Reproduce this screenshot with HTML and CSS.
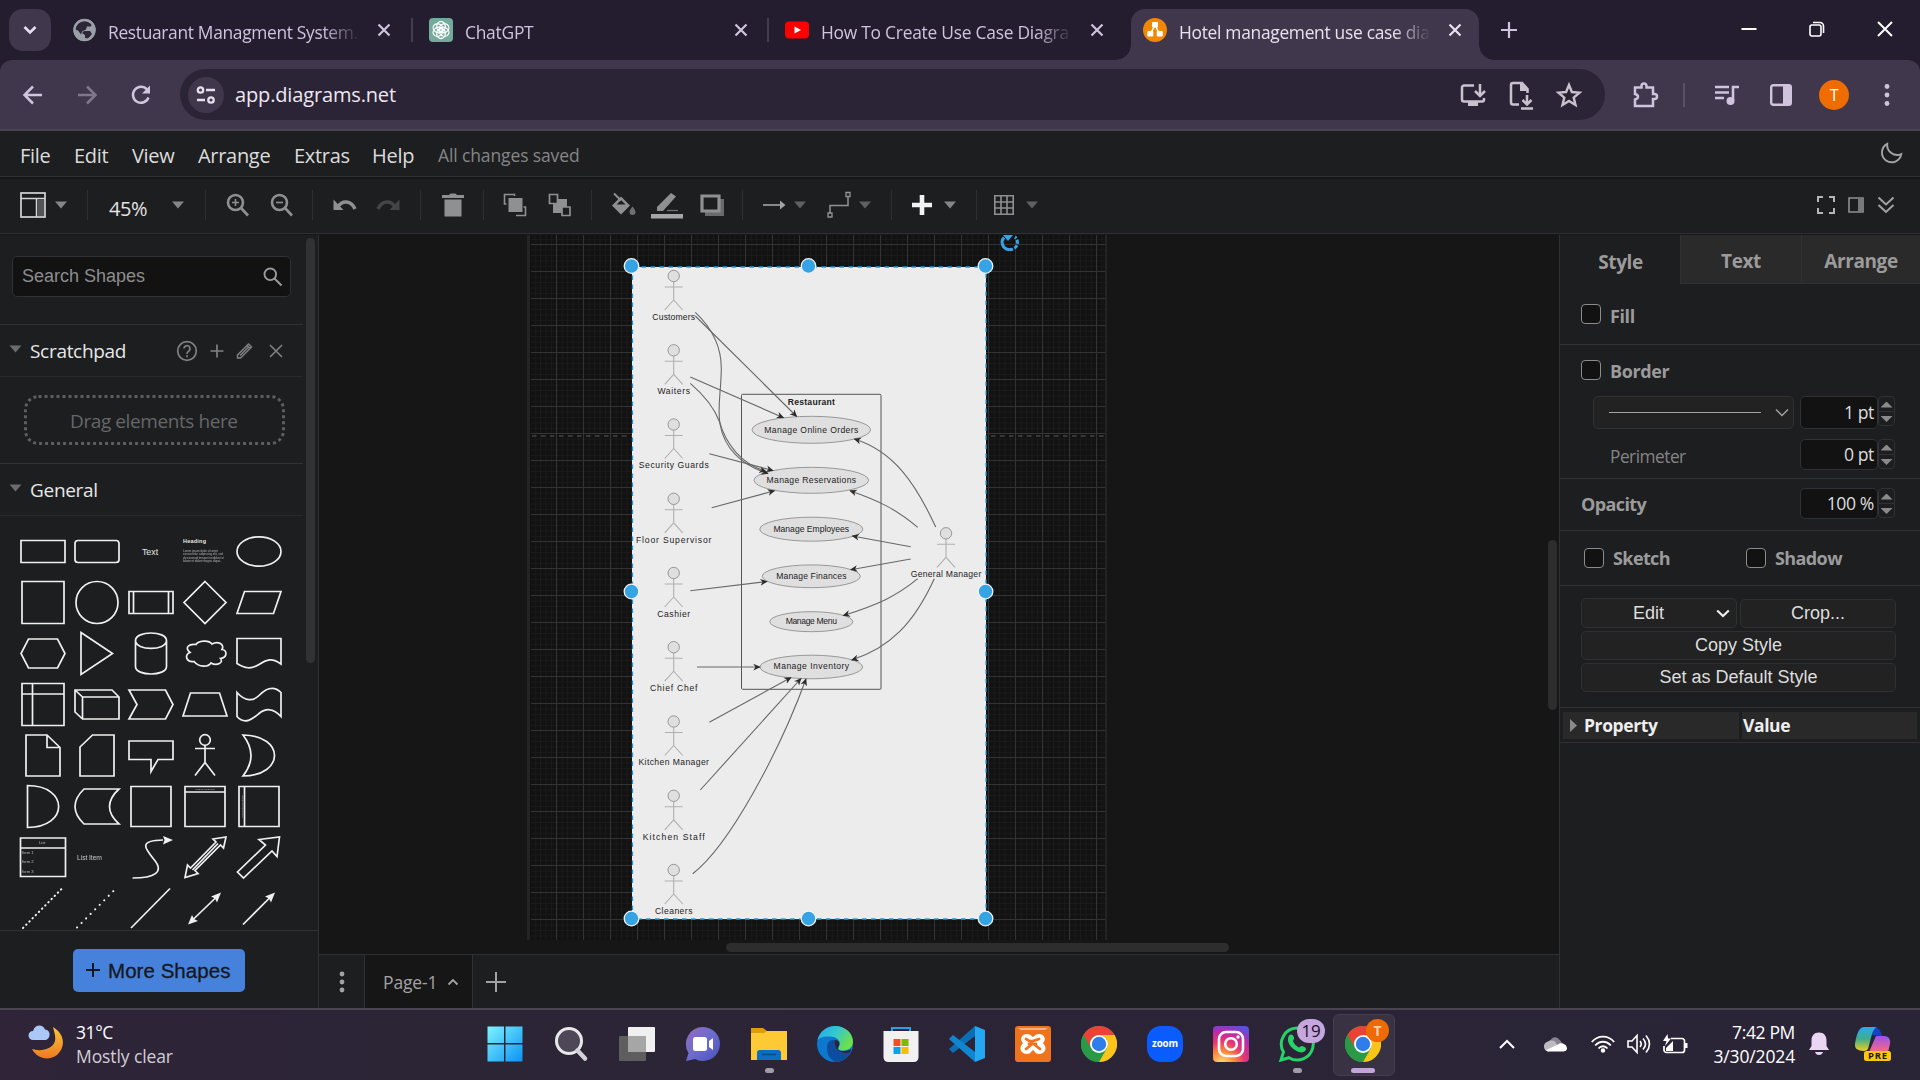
FILE: index.html
```html
<!DOCTYPE html>
<html lang="en">
<head>
<meta charset="utf-8">
<title>Hotel management use case diagram - draw.io</title>
<link rel="stylesheet" href="styles.css">
</head>
<body>
<svg class="defs" width="0" height="0" aria-hidden="true">
  <defs>
    <symbol id="close" viewBox="0 0 14 14"><path d="M1.5 1.5l11 11M12.5 1.5l-11 11" fill="none" stroke="currentColor" stroke-width="2.2"/></symbol>
    <symbol id="caret" viewBox="0 0 12 8"><path d="M0 0.5h12L6 7.5z" fill="currentColor"/></symbol>
    <symbol id="chrome" viewBox="0 0 36 36">
      <circle cx="18" cy="18" r="18" fill="#2b9a48"/>
      <path d="M2.4 9A18 18 0 0 1 33.6 9H18a9 9 0 0 0-8.2 5.4z" fill="#ea4335"/>
      <path d="M2.4 9l7.8 13.5A9 9 0 0 1 18 9z" fill="#ea4335"/>
      <path d="M2.4 9A18 18 0 0 0 18 36l7.8-13.5A9 9 0 0 1 10.2 22.5z" fill="#2b9a48"/>
      <path d="M33.6 9A18 18 0 0 1 18 36l7.8-13.5A9 9 0 0 0 18 9z" fill="#fcc419"/>
      <circle cx="18" cy="18" r="9" fill="#fff"/><circle cx="18" cy="18" r="7.2" fill="#2f7de9"/>
    </symbol>
  </defs>
</svg>

<header class="tabstrip">
  <button class="tab-search"><svg width="14" height="10" viewBox="0 0 14 10"><path d="M1.5 2L7 7.5 12.5 2" fill="none" stroke="currentColor" stroke-width="2.6"/></svg></button>
  <div class="tab">
    <svg class="favicon" width="24" height="24" viewBox="0 0 24 24"><circle cx="11.500" cy="12" r="11" fill="#9aa0a6"/><path d="M9 2.500c4-1 8 0 10 3l-1 3-4 0-1 3-4 2-1 3-3-4-3-1c0-3 3-8 7-9z" fill="#2c2637"/><path d="M11 13h6l2 3-4 5-3-1 0-3-3-2z" fill="#2c2637"/><circle cx="11.500" cy="12" r="10" fill="none" stroke="#9aa0a6" stroke-width="2.400"/></svg>
    <span class="tab-title first">Restuarant Managment System.</span>
    <svg class="x" width="14" height="14"><use href="#close"/></svg>
  </div>
  <div class="tab">
    <svg class="favicon" width="24" height="24" viewBox="0 0 24 24"><rect width="24" height="24" rx="4" fill="#74aa9c"/><g fill="none" stroke="#fff" stroke-width="1.300"><ellipse cx="12" cy="8.500" rx="4.300" ry="5"/><ellipse cx="12" cy="8.500" rx="4.300" ry="5" transform="rotate(60 12 12)"/><ellipse cx="12" cy="8.500" rx="4.300" ry="5" transform="rotate(120 12 12)"/><ellipse cx="12" cy="8.500" rx="4.300" ry="5" transform="rotate(180 12 12)"/><ellipse cx="12" cy="8.500" rx="4.300" ry="5" transform="rotate(240 12 12)"/><ellipse cx="12" cy="8.500" rx="4.300" ry="5" transform="rotate(300 12 12)"/></g></svg>
    <span class="tab-title">ChatGPT</span>
    <svg class="x" width="14" height="14"><use href="#close"/></svg>
  </div>
  <div class="tab plain">
    <svg class="favicon" width="24" height="24" viewBox="0 0 24 24"><rect y="3.500" width="24" height="17" rx="4" fill="#f00"/><path d="M9.500 8.500v7l6.500-3.500z" fill="#fff"/></svg>
    <span class="tab-title">How To Create Use Case Diagra</span>
    <svg class="x" width="14" height="14"><use href="#close"/></svg>
  </div>
  <div class="tab active">
    <svg class="favicon" width="24" height="24" viewBox="0 0 24 24"><circle cx="12" cy="12" r="12" fill="#f08705"/><path d="M12 7L7.500 16M12 7l4.500 9" stroke="#fff" stroke-width="1.600"/><rect x="9" y="4" width="6" height="5.500" rx="1" fill="#fff"/><rect x="4.300" y="13" width="6" height="5.500" rx="1" fill="#fff"/><rect x="13.700" y="13" width="6" height="5.500" rx="1" fill="#fff"/></svg>
    <span class="tab-title">Hotel management use case dia</span>
    <svg class="x" width="14" height="14"><use href="#close"/></svg>
  </div>
  <svg class="new-tab" width="16" height="16" viewBox="0 0 16 16"><path d="M8 0v16M0 8h16" stroke="#cfc3dd" stroke-width="2.200"/></svg>
  <div class="window-buttons">
    <svg width="16" height="16" viewBox="0 0 16 16"><path d="M0.500 8h15" stroke="#fff" stroke-width="2"/></svg>
    <svg width="16" height="16" viewBox="0 0 16 16"><g fill="none" stroke="#fff" stroke-width="1.600"><rect x="1" y="4" width="11" height="11" rx="2"/><path d="M4 1.500h7a3.500 3.500 0 0 1 3.500 3.500v7"/></g></svg>
    <svg width="16" height="16" viewBox="0 0 16 16"><path d="M1 1l14 14M15 1L1 15" stroke="#fff" stroke-width="1.900"/></svg>
  </div>
</header>

<nav class="browserbar">
  <svg width="24" height="24" viewBox="0 0 24 24"><path d="M21 12H4M12 3.500L3.500 12l8.500 8.500" fill="none" stroke="#d0c5de" stroke-width="2.500"/></svg>
  <svg width="24" height="24" viewBox="0 0 24 24"><path d="M3 12h17M12 3.500L20.500 12 12 20.500" fill="none" stroke="#81768d" stroke-width="2.500"/></svg>
  <svg width="24" height="24" viewBox="0 0 24 24"><path d="M19.500 14.500A8 8 0 1 1 18 6.500l2 2.500" fill="none" stroke="#d0c5de" stroke-width="2.500"/><path d="M21 2.500v8h-8z" fill="#d0c5de"/></svg>
  <div class="omnibox">
    <span class="site-info"><svg width="20" height="18" viewBox="0 0 20 18"><g fill="none" stroke="#e6e0ec" stroke-width="2.300"><circle cx="4.500" cy="4" r="2.700"/><path d="M10 4h9M1 14h8"/><circle cx="15" cy="14" r="2.700"/></g></svg></span>
    <span class="url">app.diagrams.net</span>
    <div class="omni-icons">
      <svg width="26" height="26" viewBox="0 0 26 26"><g fill="none" stroke="#c9c2ce" stroke-width="2.500"><path d="M14 3.500H4a2 2 0 0 0-2 2v12a2 2 0 0 0 2 2h18a2 2 0 0 0 2-2V16"/><path d="M20 2v11M15 9l5 5 5-5"/></g><path d="M8 20h10v4H8z" fill="#c9c2ce"/></svg>
      <svg width="26" height="28" viewBox="0 0 26 28"><g fill="none" stroke="#c9c2ce" stroke-width="2.500"><path d="M11 23.500H5a2 2 0 0 1-2-2V4a2 2 0 0 1 2-2h9l5.500 6v4"/><path d="M19 14v9M14.500 19l4.500 4.500 4.500-4.500M13 27.500h12"/></g><path d="M12 1v9h9z" fill="#c9c2ce"/></svg>
      <svg width="26" height="26" viewBox="0 0 26 26"><path d="M13 3l2.900 7 7.600.6-5.800 5 1.800 7.400-6.500-4-6.500 4 1.800-7.400-5.800-5 7.600-.6z" fill="none" stroke="#c9c2ce" stroke-width="2.400"/></svg>
    </div>
  </div>
  <svg width="28" height="28" viewBox="0 0 28 28"><path d="M4 6.500h6.500V5a2.500 2.500 0 0 1 5 0v1.500H22V13h1.500a2.500 2.500 0 0 1 0 5H22v7H4v-6.500c4-1 4-4.500 0-5.500z" fill="none" stroke="#cfc3dd" stroke-width="2.500"/></svg>
  <i class="bar-divider"></i>
  <svg width="26" height="24" viewBox="0 0 26 24"><path d="M1 4h14M1 9.500h14M1 15h9" stroke="#cfc3dd" stroke-width="2.400"/><path d="M19 18V4h6" fill="none" stroke="#cfc3dd" stroke-width="2.600"/><circle cx="16.500" cy="18" r="4" fill="#cfc3dd"/></svg>
  <svg width="24" height="24" viewBox="0 0 24 24"><rect x="2.200" y="2.200" width="19.600" height="19.600" rx="2" fill="none" stroke="#cfc3dd" stroke-width="2.400"/><path d="M14 2h8v20h-8z" fill="#cfc3dd"/></svg>
  <span class="avatar">T</span>
  <svg width="8" height="24" viewBox="0 0 8 24"><g fill="#cfc3dd"><circle cx="4" cy="3.500" r="2.400"/><circle cx="4" cy="12" r="2.400"/><circle cx="4" cy="20.500" r="2.400"/></g></svg>
</nav>

<div class="menubar">
  <span>File</span><span>Edit</span><span>View</span><span>Arrange</span><span>Extras</span><span>Help</span><span class="saved">All changes saved</span>
  <svg width="24" height="24" viewBox="0 0 24 24"><path d="M9.500 2.500a9.700 9.700 0 1 0 12.500 12A10 10 0 0 1 9.500 2.500z" transform="rotate(-8 12 12)" fill="none" stroke="#a2a3a4" stroke-width="1.900"/></svg>
</div>

<div class="toolbar">
  <svg width="28" height="28" viewBox="0 0 28 28"><rect x="2" y="2" width="24" height="24" fill="none" stroke="#d5d5d5" stroke-width="1.700"/><path d="M2 7.500h24M17.500 8v18" stroke="#d5d5d5" stroke-width="1.500"/><path d="M18.500 8.500h6.500v16.500h-6.500z" fill="#555"/></svg>
  <svg class="caret" width="12" height="8"><use href="#caret"/></svg>
  <i></i>
  <span class="zoom">45%</span>
  <svg class="caret" width="12" height="8"><use href="#caret"/></svg>
  <i></i>
  <svg width="24" height="24" viewBox="0 0 24 24"><g fill="none" stroke="#8f9091" stroke-width="2.600"><circle cx="9.500" cy="9.500" r="7.500"/><path d="M15 15l7 7.500"/><path d="M9.500 6v7M6 9.500h7" stroke-width="1.600"/></g></svg>
  <svg width="24" height="24" viewBox="0 0 24 24"><g fill="none" stroke="#8f9091" stroke-width="2.600"><circle cx="9.500" cy="9.500" r="7.500"/><path d="M15 15l7 7.500"/><path d="M6 9.500h7" stroke-width="1.600"/></g></svg>
  <i></i>
  <svg width="24" height="14" viewBox="0 0 24 14"><path d="M5 9C9 2 18 2 22 11" fill="none" stroke="#8f9091" stroke-width="3.400"/><path d="M0.500 1.500v10.500h10z" fill="#8f9091"/></svg>
  <svg width="24" height="14" viewBox="0 0 24 14"><path d="M19 9C15 2 6 2 2 11" fill="none" stroke="#434546" stroke-width="3.400"/><path d="M23.500 1.500v10.500h-10z" fill="#434546"/></svg>
  <i></i>
  <svg width="24" height="24" viewBox="0 0 24 24"><path d="M1 2h7l1.500-1.500h5L16 2h7v3H1zM3.500 6.500h17v17h-17z" fill="#8f9091"/></svg>
  <i></i>
  <svg width="24" height="24" viewBox="0 0 24 24"><path d="M5.500 5h14v14h-14z" fill="#8f9091"/><path d="M3.500 11H1.500V1.500h10V3M13 22.500h9.500V14h-2" fill="none" stroke="#8f9091" stroke-width="1.600"/></svg>
  <svg width="24" height="24" viewBox="0 0 24 24"><path d="M5 6h14v14H5z" fill="#8f9091"/><path d="M1.500 1.500h8v9h-8zM14 14h8v8.500h-8z" fill="#1d1e20" stroke="#8f9091" stroke-width="1.700"/></svg>
  <i></i>
  <svg width="26" height="26" viewBox="0 0 26 26"><path d="M11 4.500l-9 9 9 9 9-9zM6.500 12.500L11 8l4.500 4.500z" fill="#8f9091" fill-rule="evenodd"/><path d="M4 1.500l7 7" stroke="#8f9091" stroke-width="2"/><path d="M22.500 14.500s-3 3.600-3 5.500a3 3 0 0 0 6 0c0-1.900-3-5.500-3-5.500z" fill="#6f7071"/></svg>
  <svg width="32" height="30" viewBox="0 0 32 30"><path d="M6 17L20 3l5 3.500L12 21H6z" fill="#8f9091"/><path d="M16 20.500h11" stroke="#6f7071" stroke-width="1.300"/><path d="M0 24h32v4.500H0z" fill="#a5a6a7"/></svg>
  <svg width="24" height="22" viewBox="0 0 24 22"><path d="M5 5h19v17H5z" fill="#696a6b"/><path d="M2 2h17v15H2z" fill="#1d1e20" stroke="#8f9091" stroke-width="3.200"/></svg>
  <i></i>
  <svg width="24" height="12" viewBox="0 0 24 12"><path d="M1 6h18" stroke="#a2a3a4" stroke-width="1.600"/><path d="M18 1.500L23.500 6 18 10.500z" fill="#a2a3a4"/></svg>
  <svg class="caret dim" width="12" height="8"><use href="#caret"/></svg>
  <svg width="34" height="28" viewBox="0 0 34 28"><path d="M13 23V14.500h18V5" fill="none" stroke="#929394" stroke-width="1.500"/><path d="M11 22h4v4h-4zM29 1.500h4v4h-4z" fill="#1d1e20" stroke="#929394" stroke-width="1.300"/></svg>
  <svg class="caret dim" width="12" height="8"><use href="#caret"/></svg>
  <i></i>
  <svg width="20" height="20" viewBox="0 0 20 20"><path d="M10 0v20M0 10h20" stroke="#f2f2f2" stroke-width="4.600"/></svg>
  <svg class="caret" width="12" height="8"><use href="#caret"/></svg>
  <i></i>
  <svg width="20" height="20" viewBox="0 0 20 20"><path d="M.8.800h18.400v18.400H.8zM7 1v18M13 1v18M1 7h18M1 13h18" fill="none" stroke="#8f9091" stroke-width="1.600"/></svg>
  <svg class="caret dim" width="12" height="8"><use href="#caret"/></svg>
  <b></b>
  <svg width="18" height="18" viewBox="0 0 18 18"><path d="M1 6V1h5M12 1h5v5M17 12v5h-5M6 17H1v-5" fill="none" stroke="#b5b6b7" stroke-width="2"/></svg>
  <svg width="16" height="16" viewBox="0 0 16 16"><path d="M1 1h14v14H1z" fill="none" stroke="#8f9091" stroke-width="1.600"/><path d="M10 1h5v14h-5z" fill="#77797a"/></svg>
  <svg width="18" height="18" viewBox="0 0 18 18"><path d="M1.500 1.500L9 8.500l7.500-7M1.500 9L9 16l7.500-7" fill="none" stroke="#a2a3a4" stroke-width="2"/></svg>
</div>

<main class="workspace">
  <aside class="sidebar">
    <div class="sidebar-scroll">
      <div class="sidebar-content">
        <div class="search-wrap"><div class="search"><span>Search Shapes</span><svg width="20" height="20" viewBox="0 0 20 20"><g fill="none" stroke="#9a9b9c" stroke-width="1.900"><circle cx="7.300" cy="7.300" r="5.800"/><path d="M11.500 11.500l7 7"/></g></svg></div></div>
        <div class="section-title">
          <svg class="caret" width="13" height="8"><use href="#caret"/></svg><span>Scratchpad</span>
          <svg class="help" width="22" height="22" viewBox="0 0 22 22"><g fill="none" stroke="#808182" stroke-width="1.700"><circle cx="11" cy="11" r="9.300"/><path d="M8 8.500a3 3 0 1 1 4.500 2.700Q11 12 11 14"/><path d="M11 15.300v2"/></g></svg>
          <svg width="14" height="14" viewBox="0 0 14 14"><path d="M7 .5v13M.5 7h13" stroke="#808182" stroke-width="1.700"/></svg>
          <svg width="18" height="18" viewBox="0 0 18 18"><path d="M1.500 13L12.500 2l3 3-11 11H1.500zM11 3.500l3 3M4 13.500l8-8" fill="none" stroke="#808182" stroke-width="1.500"/></svg>
          <svg width="14" height="14" viewBox="0 0 14 14"><path d="M1 1l12 12M13 1L1 13" stroke="#808182" stroke-width="1.600"/></svg>
        </div>
        <div class="scratch"><svg width="261" height="50" viewBox="0 0 261 50"><rect x="1.500" y="1.500" width="258" height="47" rx="13" fill="none" stroke="#5d5e5f" stroke-width="3" stroke-dasharray="3 3"/><text x="130" y="33" text-anchor="middle" textLength="168">Drag elements here</text></svg></div>
        <div class="section-title general"><svg class="caret" width="13" height="8"><use href="#caret"/></svg><span>General</span></div>
        <div class="shapes">
          <svg viewBox="-27 -25.5 54 51"><path d="M-22-11h44v22h-44z"/></svg>
          <svg viewBox="-27 -25.5 54 51"><rect x="-22" y="-11" width="44" height="22" rx="3"/></svg>
          <svg viewBox="-27 -25.5 54 51"><text x="-1" y="3" font-size="8.800" text-anchor="middle">Text</text></svg>
          <svg viewBox="-27 -25.5 54 51"><text x="-22" y="-8.500" font-size="5.500" font-weight="bold" textLength="23">Heading</text><g font-size="3" opacity=".65"><text x="-22" y="0" textLength="35">Lorem ipsum dolor sit amet</text><text x="-22" y="3" textLength="40">consectetur adipiscing elit, sed</text><text x="-22" y="7" textLength="41">do eiusmod tempor incididunt ut</text><text x="-22" y="10" textLength="38">labore et dolore magna aliqua.</text></g></svg>
          <svg viewBox="-27 -25.5 54 51"><ellipse rx="22" ry="14.700"/></svg>

          <svg viewBox="-27 -25.5 54 51"><path d="M-21-21h42v42h-42z"/></svg>
          <svg viewBox="-27 -25.5 54 51"><circle r="21"/></svg>
          <svg viewBox="-27 -25.5 54 51"><path d="M-22-11h44v22h-44zM-17.500-11v22M17.500-11v22"/></svg>
          <svg viewBox="-27 -25.5 54 51"><path d="M0-21L21 0 0 21-21 0z"/></svg>
          <svg viewBox="-27 -25.5 54 51"><path d="M-14.500-11H22l-7.500 22H-22z"/></svg>

          <svg viewBox="-27 -25.5 54 51"><path d="M-14.500-14.500h29L22 0l-7.500 14.500h-29L-22 0z"/></svg>
          <svg viewBox="-27 -25.5 54 51"><path d="M-16-21L15.500 0-16 21z"/></svg>
          <svg viewBox="-27 -25.500 54 51"><path d="M-15.500-13v26c0 10 31 10 31 0v-26c0-10-31-10-31 0zc0 10.500 31 10.500 31 0"/></svg>
          <svg viewBox="-27 -25.5 54 51"><path d="M-9-9C-16-10-21-6-15 -1C-21 1-19 9-11 8C-6 14 3 14 6 9.500C12 13 19 9 15.500 5C23 4 22-4 17-4C20-9 13-13 7-9.500C4-14-7-13-9-9z"/></svg>
          <svg viewBox="-27 -25.5 54 51"><path d="M-22-15h44V10.500C13 4 8 6 0 11S-14 15-22 10z"/></svg>

          <svg viewBox="-27 -25.5 54 51"><path d="M-21-21h42v42h-42zM-21-10.500h42M-10.500-21v42"/></svg>
          <svg viewBox="-27 -25.5 54 51"><path d="M-22-14.500h37L22-7.500V14.500H-14.500L-22 7.500zM-22-14.500l7.500 7H22M-14.500-7.500v22"/></svg>
          <svg viewBox="-27 -25.5 54 51"><path d="M-22-14.500h36.500L22 0l-7.500 14.500H-22L-14 0z"/></svg>
          <svg viewBox="-27 -25.5 54 51"><path d="M-14.500-11.500h29L22 11.500h-44z"/></svg>
          <svg viewBox="-27 -25.5 54 51"><path d="M-22-12C-14-3-6-3 0-9S14-20 22-12V12C14 3 6 4 0 9S-14 21-22 12z"/></svg>

          <svg viewBox="-27 -25.5 54 51"><path d="M-17-20.500H4L17-8v28.500h-34zM4-20.500V-8h13"/></svg>
          <svg viewBox="-27 -25.5 54 51"><path d="M-4.500-20.500H17v41h-34V-8.500z"/></svg>
          <svg viewBox="-27 -25.5 54 51"><path d="M-22-14.500h44V4H7L0 16V4h-22z"/></svg>
          <svg viewBox="-27 -25.5 54 51"><circle cy="-15.500" r="5.300"/><path d="M0-10V7M-10-7h20M-10 20L0 7l10 13"/></svg>
          <svg viewBox="-27 -25.5 54 51"><path d="M-16-20.500C26-20 26 20-16 20.500Q0 0-16-20.500z"/></svg>

          <svg viewBox="-27 -25.5 54 51"><path d="M-15.500-21C26-21 26 21-15.500 21z"/></svg>
          <svg viewBox="-27 -25.5 54 51"><path d="M-13-17.500H22Q3 0 22 17.500H-13Q-31 0-13-17.500z"/></svg>
          <svg viewBox="-27 -25.5 54 51"><path d="M-20-20h40v40h-40z"/></svg>
          <svg viewBox="-27 -25.5 54 51"><path d="M-20-20h40v40h-40zM-20-14.500h40"/><text x="0" y="-16.500" font-size="2.500" opacity=".7" text-anchor="middle">Vertical Container</text></svg>
          <svg viewBox="-27 -25.5 54 51"><path d="M-20-20h40v40h-40zM-14.500-20v40"/><text x="0" y="-16.500" font-size="2.500" opacity=".7" text-anchor="middle" transform="rotate(-90)">Horizontal Container</text></svg>

          <svg viewBox="-27 -25.5 54 51"><path d="M-22.500-19.500h45v38.500h-45zM-22.500-9.500h45"/><g font-size="4.200" opacity=".7"><text x="-4" y="-14">List</text><text x="-21" y="-4">Item 1</text><text x="-21" y="5">Item 2</text><text x="-21" y="15">Item 3</text></g></svg>
          <svg viewBox="-27 -25.5 54 51"><text x="-20" y="2" font-size="6.800" opacity=".8" textLength="25">List Item</text></svg>
          <svg viewBox="-27 -25.5 54 51"><path d="M-18.500 20.500C3 20.500 14 15 3 2C-7-10-12-17 12-17.500"/><path class="solid" d="M12-21.500l10 4-10 4.500 1.500-4.500z"/></svg>
          <svg viewBox="-27 -25.5 54 51"><path d="M21-20.500L18.500-9.500l-3-3L-10 13l3 3-13 4 2.500-12.500 3 3L11-15.500l-3-3zM-12.500 12.500L13-14"/></svg>
          <svg viewBox="-27 -25.5 54 51"><path d="M20.500-20.500L18-1l-5-5.500L-15.500 20.500-21.500 14.500 6.500-12.500 0-18z"/></svg>

          <svg viewBox="-27 -25.5 54 51"><path class="dots" d="M-20 19.500L19-20" stroke-dasharray="0.500 4"/></svg>
          <svg viewBox="-27 -25.5 54 51"><path class="dots" d="M-20 19L17-18" stroke-dasharray="0.200 6.200"/></svg>
          <svg viewBox="-27 -25.5 54 51"><path d="M-20 19.500L19-20"/></svg>
          <svg viewBox="-27 -25.5 54 51"><path d="M-13 12L12-12"/><path class="solid" d="M16-16l-4 10-2-4-4-2zM-17 16l10-3.500-4-2-2-4z"/></svg>
          <svg viewBox="-27 -25.5 54 51"><path d="M-16 16L12-12"/><path class="solid" d="M16-16l-4 10-2-4-4-2z"/></svg>
        </div>
      </div>
      <div class="sidebar-track"><i></i></div>
    </div>
    <div class="more"><button><svg width="14" height="14" viewBox="0 0 14 14"><path d="M7 0v14M0 7h14" stroke="#15181d" stroke-width="2"/></svg><span>More Shapes</span></button></div>
  </aside>

  <section class="editor">
    <div class="canvas-row">
      <svg class="canvas" width="1229" height="705" viewBox="319 235 1229 705">
        <defs>
          <pattern id="minor" x="529.300" y="244.300" width="5.400" height="5.400" patternUnits="userSpaceOnUse"><path d="M.5 0v5.400M0 .5h5.400" stroke="#1a1a1a" stroke-width="1"/></pattern>
          <pattern id="major" x="529" y="244" width="27" height="27" patternUnits="userSpaceOnUse"><path d="M.5 0v27M0 .5h27" stroke="#323334" stroke-width="1"/></pattern>
          <marker id="arrow" viewBox="0 0 10 10" refX="9" refY="5" markerWidth="7.500" markerHeight="7.500" markerUnits="userSpaceOnUse" orient="auto"><path d="M0 .5L10 5 0 9.500 3 5z" fill="#2b2b2b"/></marker>
          <g id="actor" fill="none" stroke="#b0b0b0"><path d="M0 5.700V24M-9 11H9M-9 34L0 24l9 10" stroke-width="1.100"/><circle r="5.700" fill="#dfdfdf" stroke="#8f8f8f" stroke-width=".9"/></g>
        </defs>
        <rect x="319" y="235" width="1229" height="705" fill="#161616"/>
        <rect x="527" y="235" width="580" height="705" fill="#242424"/>
        <rect x="530" y="235" width="575" height="705" fill="#121212"/>
        <rect x="531" y="235" width="574" height="705" fill="url(#minor)"/>
        <rect x="531" y="235" width="574" height="705" fill="url(#major)"/>
        <path d="M532 436h573" stroke="#5a5a5a" stroke-width="1" stroke-dasharray="4.500 4.500"/>
        <rect x="632" y="267" width="354" height="652" fill="#ececec"/>
        <rect x="741.500" y="394.300" width="139.500" height="295" rx="1" fill="none" stroke="#555" stroke-width="1"/>
        <g fill="#dfdfdf" stroke="#8f8f8f" stroke-width=".9">
          <ellipse cx="811.300" cy="429.800" rx="59.300" ry="13.500"/><ellipse cx="811.300" cy="480.300" rx="57.300" ry="13"/><ellipse cx="811.300" cy="529.200" rx="51.500" ry="12"/><ellipse cx="811.300" cy="576.300" rx="49" ry="11.400"/><ellipse cx="811.300" cy="621.700" rx="41.500" ry="10"/><ellipse cx="811.300" cy="667" rx="51.300" ry="11.800"/>
        </g>
        <use href="#actor" x="673.700" y="276"/><use href="#actor" x="673.700" y="350.300"/><use href="#actor" x="673.700" y="424.500"/><use href="#actor" x="673.700" y="498.800"/><use href="#actor" x="673.700" y="573"/><use href="#actor" x="673.700" y="647.200"/><use href="#actor" x="673.700" y="721.500"/><use href="#actor" x="673.700" y="795.800"/><use href="#actor" x="673.700" y="870"/><use href="#actor" x="946" y="533.300"/>
        <g class="labels">
          <text x="673.700" y="319.800" textLength="42.700">Customers</text>
          <text x="673.700" y="394" textLength="32.500">Waiters</text>
          <text x="673.700" y="468" textLength="70">Security Guards</text>
          <text x="673.700" y="543" textLength="75.500">Floor Supervisor</text>
          <text x="673.700" y="617" textLength="33">Cashier</text>
          <text x="673.700" y="691" textLength="47.500">Chief Chef</text>
          <text x="673.700" y="765" textLength="70.500">Kitchen Manager</text>
          <text x="673.700" y="840" textLength="62">Kitchen Staff</text>
          <text x="673.700" y="914" textLength="37.500">Cleaners</text>
          <text x="946" y="577" textLength="70.500">General Manager</text>
          <text x="811.300" y="405.200" textLength="47.300" font-weight="bold">Restaurant</text>
          <text x="811.300" y="433.200" textLength="94">Manage Online Orders</text>
          <text x="811.300" y="483" textLength="89.500">Manage Reservations</text>
          <text x="811.300" y="532" textLength="75.700">Manage Employees</text>
          <text x="811.300" y="579" textLength="70.300">Manage Finances</text>
          <text x="811.300" y="624" textLength="51.300">Manage Menu</text>
          <text x="811.300" y="669" textLength="75.500">Manage Inventory</text>
        </g>
        <g class="edges">
          <path d="M695.300 316L796.700 416.500"/>
          <path d="M695.300 312.300C712 328 721.300 345 721.300 368C721.300 390 717 408 720 424C724 447 740 465 768 473.500"/>
          <path d="M690.300 377L783.500 417.700"/>
          <path d="M690.300 383.300C704 395 714 407 719.500 421.700C726 445 742 464 766 471.500"/>
          <path d="M709.300 453.700L773 470.500"/>
          <path d="M711.700 507.700L774.500 490.800"/>
          <path d="M690.300 590.700L767 581.500"/>
          <path d="M697 667h63"/>
          <path d="M709.300 722.300L791 677.500"/>
          <path d="M700.300 790L801 678.500"/>
          <path d="M692.700 873.700C730 845 780 750 806 679"/>
          <path d="M935.700 527C915 482 893 451 854.300 439"/>
          <path d="M917.700 527.300C897 510 880 501 850 490.700"/>
          <path d="M910.700 546.700L852.300 536"/>
          <path d="M910.700 559L850.700 569.700"/>
          <path d="M917.700 578.700C897 596 877 605 843.300 615.500"/>
          <path d="M934.300 578.700C914 623 890 648 851.700 660"/>
        </g>
        <rect x="632.500" y="267" width="353.500" height="652" fill="none" stroke="#1f9ae0" stroke-width="1.300" stroke-dasharray="4.500 4.500"/>
        <g fill="#36a3e4" stroke="#f2f2f2" stroke-width="1.300">
          <circle cx="631.500" cy="266" r="7.300"/><circle cx="808.500" cy="266" r="7.300"/><circle cx="985.500" cy="266" r="7.300"/>
          <circle cx="631.500" cy="591.500" r="7.300"/><circle cx="985.500" cy="591.500" r="7.300"/>
          <circle cx="631.500" cy="918.500" r="7.300"/><circle cx="808.500" cy="918.500" r="7.300"/><circle cx="985.500" cy="918.500" r="7.300"/>
        </g>
        <path d="M1004 237.500a7.200 7.200 0 0 0 5 12" fill="none" stroke="#36a3e4" stroke-width="3"/><path d="M1009 249.500a7.200 7.200 0 0 0 6-12.500" fill="none" stroke="#36a3e4" stroke-width="3" stroke-dasharray="4 1.500"/><path d="M1003 235h10l-5 6z" fill="#36a3e4"/>
      </svg>
      <div class="v-track"><i></i></div>
    </div>
    <div class="h-track"><i></i></div>
    <footer class="pages">
      <svg width="6" height="24" viewBox="0 0 6 24"><g fill="#a2a3a4"><circle cx="3" cy="4" r="2.400"/><circle cx="3" cy="12" r="2.400"/><circle cx="3" cy="20" r="2.400"/></g></svg>
      <div class="page-tab"><span>Page-1</span><svg width="12" height="8" viewBox="0 0 12 8"><path d="M1.500 6.500L6 2l4.500 4.500" fill="none" stroke="#a2a3a4" stroke-width="1.800"/></svg></div>
      <svg class="add-page" width="20" height="20" viewBox="0 0 20 20"><path d="M10 0v20M0 10h20" stroke="#a2a3a4" stroke-width="2"/></svg>
    </footer>
  </section>

  <aside class="format">
    <div class="format-tabs"><span class="on">Style</span><span>Text</span><span>Arrange</span></div>
    <div class="row fill"><i class="check"></i><b>Fill</b></div>
    <div class="block border-block">
      <div class="row"><i class="check"></i><b>Border</b></div>
      <div class="row line-row">
        <div class="line-select"><i></i><svg width="14" height="9" viewBox="0 0 14 9"><path d="M1 1.500l6 6 6-6" fill="none" stroke="#a2a3a4" stroke-width="1.400"/></svg></div>
        <span class="num tall">1 pt</span><span class="stepper"><i class="up"></i><i class="down"></i></span>
      </div>
      <div class="row perimeter"><span class="plabel">Perimeter</span><span class="num">0 pt</span><span class="stepper"><i class="up"></i><i class="down"></i></span></div>
    </div>
    <div class="row opacity"><b>Opacity</b><span class="num">100 %</span><span class="stepper"><i class="up"></i><i class="down"></i></span></div>
    <div class="row effects"><i class="check"></i><b>Sketch</b><i class="check"></i><b>Shadow</b></div>
    <div class="actions">
      <div class="select"><span>Edit</span><svg width="14" height="9" viewBox="0 0 14 9"><path d="M1.200 1.500L7 7l5.800-5.500" fill="none" stroke="#eee" stroke-width="2.200"/></svg></div>
      <div class="crop">Crop...</div><div class="wide">Copy Style</div><div class="wide">Set as Default Style</div>
    </div>
    <div class="props"><div><svg width="7" height="13" viewBox="0 0 7 13"><path d="M0 0l7 6.500L0 13z" fill="#8a8a8a"/></svg>Property</div><div>Value</div></div>
  </aside>
</main>

<footer class="taskbar">
  <div class="weather">
    <svg width="36" height="36" viewBox="0 0 36 36"><defs><linearGradient id="moon" x1="0" y1="0" x2="0" y2="1"><stop offset="0" stop-color="#f8c63b"/><stop offset="1" stop-color="#ee7a21"/></linearGradient></defs><path d="M25 2c12 7 13 20 4 28-8 6-20 4-25-6 9 3 21 0 23-8 1-5-1-9-2-14z" fill="url(#moon)"/><path d="M5 15a4.500 4.500 0 0 1 0-9C7-1 15-1 17 4.500c6 0 6 9 1 10.500z" fill="#a9c8f7"/></svg>
    <div><p>31°C</p><p class="sub">Mostly clear</p></div>
  </div>
  <div class="apps">
    <div><svg width="36" height="36" viewBox="0 0 36 36"><defs><linearGradient id="win" x1="0" y1="0" x2="1" y2="1"><stop offset="0" stop-color="#7ff3ff"/><stop offset="1" stop-color="#0a93f5"/></linearGradient></defs><path d="M.5.500H17V17H.5zM18.500.500H35.500V17h-17zM.5 18.500H17v17H.5zM18.500 18.500h17v17h-17z" fill="url(#win)"/></svg></div>
    <div><svg width="36" height="36" viewBox="0 0 36 36"><circle cx="16" cy="15" r="12.500" fill="#4d4757" stroke="#e8e8ea" stroke-width="3"/><path d="M24.500 24.500l7.500 8" stroke="#d2d2d8" stroke-width="4.500" stroke-linecap="round"/></svg></div>
    <div><svg width="36" height="36" viewBox="0 0 36 36"><rect x="9" y="1" width="27" height="25" rx="1" fill="#f0f0f0"/><rect y="10" width="27" height="25" rx="1" fill="#5e5e5e"/><path d="M9 10h18v16H9z" fill="#a6a6a6"/></svg></div>
    <div><svg width="36" height="36" viewBox="0 0 36 36"><defs><linearGradient id="chat" x1="0" y1="0" x2="1" y2="1"><stop offset="0" stop-color="#946db5"/><stop offset=".5" stop-color="#6c6bd0"/><stop offset="1" stop-color="#4a52bd"/></linearGradient></defs><path d="M18 1a17 17 0 1 1-8 32L1 35l2.500-8A17 17 0 0 1 18 1z" fill="url(#chat)"/><rect x="8" y="11" width="14" height="14" rx="2.500" fill="#fff"/><path d="M24 15l4-3v12l-4-3z" fill="#fff"/></svg></div>
    <div class="running"><svg width="36" height="36" viewBox="0 0 36 36"><path d="M0 2h12l4 3v6H0z" fill="#dd9d07"/><path d="M0 7h13l3-2h20v29H0z" fill="#fdc934"/><path d="M6 34V27q0-3 3-3h18q3 0 3 3v7z" fill="#0a6fc2"/><path d="M11 28.500h14" stroke="#064b8a" stroke-width="1.600"/></svg></div>
    <div><svg width="36" height="36" viewBox="0 0 36 36"><defs><linearGradient id="edge" x1="0" y1="0" x2="1" y2=".5"><stop offset="0" stop-color="#2aa6e0"/><stop offset=".5" stop-color="#32c7d4"/><stop offset="1" stop-color="#6de04a"/></linearGradient></defs><circle cx="18" cy="18" r="18" fill="#0c78cf"/><path d="M.5 14C3 5 10 0 18 0c10 0 18 7 18 15.500 0 7-6 9-10 9-5 0-6-2-4-4 3-5-2-10-9-10C6 10 2 12 .5 14z" fill="url(#edge)"/><path d="M10 22c0-5 3-9 8-8-1 9 6 14 16 12-4 7-9 9-14 10-6-1-10-7-10-14z" fill="#0f4c9c"/><path d="M18 14c5 0 5 4 3.500 7-1 2 0 4 5 4 4 0 6-1 7.500-2l-.5 3c-4 2-9 1-12-2-3-2-4-6-3.500-10z" fill="#2b2536"/></svg></div>
    <div><svg width="36" height="36" viewBox="0 0 36 36"><path d="M9 7V2h18v5" fill="none" stroke="#2a9fe8" stroke-width="2"/><path d="M.5 5h35v26q0 5-5 5h-25q-5 0-5-5z" fill="#f1f1f1"/><path d="M10.500 13h7v7h-7z" fill="#f25022"/><path d="M18.500 13h7v7h-7z" fill="#7fba00"/><path d="M10.500 21h7v7h-7z" fill="#00a4ef"/><path d="M18.500 21h7v7h-7z" fill="#ffb900"/></svg></div>
    <div><svg width="36" height="36" viewBox="0 0 36 36"><path d="M26 0v10L4 27 0 23z" fill="#0b6fb5"/><path d="M0 13l4-4 22 17v10z" fill="#1086d0"/><path d="M26 0l10 4v28l-10 4z" fill="#25a7f2"/></svg></div>
    <div><svg width="36" height="36" viewBox="0 0 36 36"><rect width="36" height="36" rx="3" fill="#f0731c"/><path d="M3 2h30l-3 2H6z" fill="#f9b183"/><path d="M12 8c-5 0-8 5-4 9-5 5-2 11 4 11 4 0 5-4 6-4s2 4 6 4c6 0 9-6 4-11 4-4 1-9-4-9-4 0-5 3-6 3s-2-3-6-3z" fill="#fff"/><path d="M11 13q4 3 7 2t6-2M14 18h7M11 23l5-4M25 23l-5-4" fill="none" stroke="#f0731c" stroke-width="2.800" stroke-linecap="round"/></svg></div>
    <div><svg width="36" height="36"><use href="#chrome"/></svg></div>
    <div><svg width="36" height="36" viewBox="0 0 36 36"><rect width="36" height="36" rx="14" fill="#0b5cff"/><text x="18" y="21" text-anchor="middle" class="zoomword" textLength="26" lengthAdjust="spacingAndGlyphs">zoom</text></svg></div>
    <div><svg width="36" height="36" viewBox="0 0 36 36"><defs><radialGradient id="ig" cx=".25" cy="1.050" r="1.150"><stop offset="0" stop-color="#ffe07a"/><stop offset=".3" stop-color="#fb8b3c"/><stop offset=".55" stop-color="#e8356f"/><stop offset=".8" stop-color="#b72bb0"/><stop offset="1" stop-color="#5b51d8"/></radialGradient></defs><rect width="36" height="36" rx="4" fill="url(#ig)"/><g fill="none" stroke="#fff" stroke-width="2.600"><rect x="6" y="6" width="24" height="24" rx="7"/><circle cx="18" cy="18" r="5.800"/></g><circle cx="25" cy="11" r="1.700" fill="#fff"/></svg></div>
    <div class="running"><svg width="36" height="36" viewBox="0 0 36 36"><path d="M18 2a16 16 0 1 1-8 29.700L2 34l2.500-8A16 16 0 0 1 18 2z" fill="none" stroke="#25d366" stroke-width="3"/><path d="M10 9.500c2-2 4-1 5 2 .6 1.500-.8 2.300-1 3.500 1 3 3 5 6 6.500 1 0 1.800-2 3-1.500 4 1.500 5 2.500 3 5-2 2-6 2-10-1-5-3-9-9-6-14.500z" fill="#25d366"/></svg><span class="badge">19</span></div>
    <div class="running current"><svg width="36" height="36"><use href="#chrome"/></svg><span class="badge profile">T</span></div>
  </div>
  <div class="tray">
    <svg class="up-arrow" width="16" height="10" viewBox="0 0 16 10"><path d="M1 9l7-7 7 7" fill="none" stroke="#fff" stroke-width="2"/></svg>
    <svg class="cloud" width="24" height="16" viewBox="0 0 24 16"><path d="M6 6q6-10 13 1l-4 4z" fill="#86838e"/><path d="M5 15.500A5 5 0 0 1 4 6c5-3 9-1 10 3l-2 5z" fill="#bdbbc2"/><path d="M3 14L14 9c4-4 10-1 10 3.500 0 2-2 3-4 3H6q-2 0-3-1.500z" fill="#fff"/></svg>
    <svg class="wifi" width="24" height="18" viewBox="0 0 24 18"><g fill="none" stroke="#fff" stroke-width="1.800"><path d="M.8 7C7-.2 17-.2 23.200 7M4.200 10.500c4.500-5 11.100-5 15.600 0M7.500 13.500c2.500-3 6.500-3 9 0"/></g><circle cx="12" cy="15.500" r="2.200" fill="#fff"/></svg>
    <svg class="sound" width="24" height="20" viewBox="0 0 24 20"><g fill="none" stroke="#fff" stroke-width="1.600"><path d="M1 7h4l5-5.500v17L5 13H1z"/><path d="M13 7q2.500 3 0 6M16 4.500q5 5.500 0 11M19 1.500q7 8.500 0 17"/></g></svg>
    <svg class="battery" width="25" height="20" viewBox="0 0 25 20"><path d="M8 4.500h11a2.500 2.500 0 0 1 2.500 2.500v9a2.500 2.500 0 0 1-2.500 2.500H3.500A2.500 2.500 0 0 1 1 16v-4" fill="none" stroke="#fff" stroke-width="1.700"/><path d="M22 9h2.500v5H22zM3 14l7-7v10H3zM4.500 0L0 7h3.500L2 12l6-7.500H5z" fill="#fff"/></svg>
    <div class="clock"><p>7:42 PM</p><p class="date">3/30/2024</p></div>
    <svg class="bell" width="20" height="24" viewBox="0 0 20 24"><path d="M10 .5c5 0 7.500 3.500 7.500 8V14l2.500 4H0l2.500-4V8.500C2.500 4 5 .5 10 .5zM6 20h8q-1 3-4 3t-4-3z" fill="#ead6f2"/></svg>
    <svg class="copilot" width="36" height="36" viewBox="0 0 36 36"><defs><linearGradient id="cop1" x1="0" y1="0" x2="0" y2="1"><stop offset="0" stop-color="#2ba9f5"/><stop offset=".5" stop-color="#3fae8a"/><stop offset="1" stop-color="#f0cf1d"/></linearGradient><linearGradient id="cop2" x1="0" y1="0" x2="0" y2="1"><stop offset="0" stop-color="#9b52ee"/><stop offset="1" stop-color="#fb6a7c"/></linearGradient></defs><path d="M19 1q6 0 8 9l-10-1z" fill="#1642c9"/><path d="M9 1h13q-3 1-5 7l-4 15q-1 2-4 2-10 0-9-7C1 12 3 1 9 1z" fill="url(#cop1)"/><path d="M21 10h8q7 0 6 8l-2 8H14z" fill="url(#cop2)"/><rect x="9" y="25" width="27" height="10" rx="2.500" fill="#fcc70c"/><text x="22.500" y="33" text-anchor="middle" class="pre" textLength="19">PRE</text></svg>
  </div>
</footer>
</body>
</html>
```
FILE: styles.css
```css
* { box-sizing: border-box; }
body { margin: 0; width: 1920px; height: 1080px; overflow: hidden; display: flex; flex-direction: column; background: #241d2f; color: #e3e3e3; font-family: "Open Sans", "Noto Sans", sans-serif; font-size: 18px; letter-spacing: -0.02em; }
svg { display: block; flex: none; overflow: visible; }
p { margin: 0; }
button { border: 0; padding: 0; font: inherit; color: inherit; }
.defs { position: absolute; }

/* browser tabs */
.tabstrip { height: 60px; flex: none; display: flex; color: #cfc3dd; }
.tab-search { margin: 9px 6px 0 9px; width: 42px; height: 42px; border-radius: 14px; background: #40374c; color: #e8e0f0; display: grid; place-items: center; }
.tab { width: 356px; height: 42px; margin-top: 9px; padding-left: 16px; display: flex; align-items: center; background: linear-gradient(#463c52, #463c52) right center / 2px 24px no-repeat; }
.tab.plain { background: none; }
.favicon { margin-right: 12px; }
.tab-title { width: 254px; line-height: 24px; padding-top: 4px; white-space: nowrap; overflow: hidden; font-size: 17.4px; letter-spacing: -0.25px; mask-image: linear-gradient(90deg, #000 215px, transparent 252px); }
.tab-title.first { margin-left: -1px; letter-spacing: -0.33px; }
.tab .x { margin-left: 15px; }
.tab.active { position: relative; width: 348px; height: 51px; padding: 0 0 9px 12px; margin-left: 6px; background: #40374c; color: #e9e1ee; border-radius: 14px 14px 0 0; }
.tab.active .tab-title { letter-spacing: -0.3px; }
.tab.active::before, .tab.active::after { content: ""; position: absolute; bottom: 0; width: 15px; height: 15px; }
.tab.active::before { left: -15px; background: radial-gradient(circle at 0 0, transparent 14.5px, #40374c 15px); }
.tab.active::after { right: -15px; background: radial-gradient(circle at 100% 0, transparent 14.5px, #40374c 15px); }
.new-tab { margin: 22px 0 0 22px; }
.window-buttons { margin: 21px 27px 0 auto; display: flex; gap: 52px; }

/* address bar */
.browserbar { height: 71px; flex: none; display: flex; align-items: center; padding: 0 29px 0 21px; background: #40374c; border-bottom: 2px solid #4a4452; border-radius: 12px 12px 0 0; }
.browserbar > svg:nth-child(2), .browserbar > svg:nth-child(3) { margin-left: 30px; }
.omnibox { width: 1425px; height: 51px; margin-left: 27px; padding: 0 23px 0 8px; display: flex; align-items: center; flex: none; border-radius: 26px; background: #2b2436; }
.site-info { width: 36px; height: 36px; border-radius: 50%; background: #40374c; display: grid; place-items: center; }
.url { margin-left: 11px; font-size: 20px; letter-spacing: -0.15px; color: #eee8f2; }
.omni-icons { margin-left: auto; display: flex; align-items: center; gap: 22px; }
.omnibox + svg { margin-left: 26px; }
.bar-divider { width: 2px; height: 24px; margin: 0 29px 0 24px; background: #5a5066; }
.bar-divider + svg + svg { margin-left: 29px; }
.avatar { flex: none; width: 30px; height: 30px; margin: 0 auto 0 26px; border-radius: 50%; background: #ef6c00; color: #fff; font-size: 16px; line-height: 30px; text-align: center; }

/* menu and toolbar */
.menubar { height: 46px; flex: none; display: grid; grid-template-columns: 54px 58px 66px 96px 78px 66px 1fr 24px; align-items: center; padding: 0 17px 0 20px; font-size: 20px; letter-spacing: -0.3px; border-bottom: 1px solid #303134; background: #1d1e20; color: #dcdcdc; }
.menubar span { padding-top: 3px; }
.menubar svg { margin-bottom: 2px; }
.menubar .saved { padding-top: 2px; color: #858687; font-size: 17.5px; letter-spacing: -0.12px; }
.toolbar { height: 57px; flex: none; display: grid; grid-template-columns: 38px 18px 34px 48px 52px 2px 64px 24px 36px 30px 56px 8px 58px 2px 62px 28px 34px 30px 58px 32px 28px 36px 16px 52px 10px 42px 20px 36px 16px 39px 18px 1fr 40px 20px 40px; align-items: center; padding: 0 14px 2px; background: #1d1e20; border-top: 2px solid #151617; border-bottom: 1px solid #303134; }
.toolbar > * { justify-self: center; }
.toolbar > i { width: 1px; height: 30px; background: #2e2f31; }
.toolbar .zoom { font-size: 20px; letter-spacing: -0.5px; padding-top: 6px; }
.caret { color: #858687; }
.caret.dim { color: #5f6061; }

.workspace { height: 774px; flex: none; display: flex; background: #1d1e20; border-top: 1px solid #151617; }

/* shape sidebar */
.sidebar { width: 319px; display: flex; flex-direction: column; border-right: 1px solid #303134; }
.sidebar-scroll { height: 696px; display: flex; border-bottom: 1px solid #303134; overflow: hidden; }
.sidebar-content { width: 303px; }
.sidebar-track { width: 15px; padding: 3px 3px 0; }
.sidebar-track i { display: block; height: 425px; border-radius: 5px; background: #313234; }
.search-wrap { height: 90px; padding: 21px 12px 0; border-bottom: 1px solid #303134; }
.search { height: 41px; display: flex; align-items: center; justify-content: space-between; padding: 0 7px 0 9px; border: 1px solid #303134; border-radius: 5px; background: #121212; color: #8d8d8d; font: 18px "Liberation Sans", Arial, sans-serif; letter-spacing: 0; }
.section-title { height: 52px; display: flex; align-items: center; padding: 0 20px 0 9px; border-bottom: 1px solid #292a2c; font-size: 19px; font-weight: 500; letter-spacing: -0.3px; color: #e8e8e8; }
.section-title span { margin-left: 8px; }
.section-title .caret { margin-top: -4px; color: #6b6c6d; }
.section-title .help { margin-left: auto; }
.section-title svg + svg { margin-left: 12px; }
.section-title svg:last-child { margin-left: 15px; }
.section-title.general svg:last-child { margin-left: 0; }
.scratch { height: 87px; padding: 18px 0 0 24px; border-bottom: 1px solid #303134; }
.scratch text { font-size: 19px; fill: #666768; letter-spacing: 0; }
.shapes { display: grid; grid-template-columns: repeat(5, 54px); grid-auto-rows: 51px; padding: 10px 0 0 16px; font-family: "Liberation Sans", Arial, sans-serif; letter-spacing: 0; }
.shapes svg { width: 54px; height: 51px; fill: none; stroke: #f0f0f0; stroke-width: 1.7; }
.shapes text { fill: #e8e8e8; stroke: none; }
.shapes .solid { fill: #f0f0f0; stroke: none; }
.shapes .dots { stroke-width: 2; stroke-linecap: round; }
.more { padding: 18px 0 0 73px; }
.more button { width: 172px; height: 43px; display: flex; align-items: center; padding-left: 13px; gap: 8px; border-radius: 5px; background: #4681dc; color: #15181d; font: 20.5px "Liberation Sans", Arial, sans-serif; letter-spacing: 0.05px; -webkit-text-stroke: 0.3px #15181d; }
.more svg { margin-bottom: 2px; }
.more span { padding-top: 1px; }

/* drawing area */
.editor { width: 1240px; display: flex; flex-direction: column; background: #161616; }
.canvas-row { display: flex; height: 705px; overflow: hidden; }
.canvas { overflow: hidden; }
.labels { font: 8.6px "Liberation Sans", Arial, sans-serif; letter-spacing: 0; fill: #222; text-anchor: middle; }
.edges { fill: none; stroke: #686868; stroke-width: 1.1; }
.edges path { marker-end: url(#arrow); }
.v-track { width: 10px; padding: 305px 1px 0 0; }
.v-track i { display: block; height: 170px; border-radius: 5px; background: #2d2d2e; }
.h-track { height: 14px; padding: 3px 0 0 407px; }
.h-track i { display: block; width: 503px; height: 9px; border-radius: 5px; background: #2d2d2e; }
.pages { height: 54px; display: flex; align-items: center; padding-left: 20px; border-top: 1px solid #303134; background: #1d1e20; color: #a2a3a4; }
.page-tab { width: 109px; height: 53px; margin: 0 13px 0 19px; padding: 1px 13px 0 18px; display: flex; align-items: center; justify-content: space-between; border: solid #303134; border-width: 0 1px; background: #161616; font-size: 17.5px; letter-spacing: -0.15px; }

/* format panel */
.format { width: 361px; border-left: 1px solid #303134; color: #9b9b9b; font-size: 18px; letter-spacing: -0.4px; }
.format b { font-weight: 700; }
.format-tabs { height: 49px; display: grid; grid-template-columns: 120px 121px 119px; grid-template-rows: 49px; font-size: 19px; font-weight: 700; line-height: 52px; text-align: center; }
.format-tabs span { background: #2a2a2a; border: solid #303134; border-width: 0 0 1px 1px; }
.format-tabs .on { background: none; border-color: transparent; line-height: 54px; }
.row { display: flex; align-items: center; }
.check { width: 20px; height: 20px; border: 1.5px solid #8c8c8c; border-radius: 4px; background: #121212; }
.fill { height: 61px; padding-left: 21px; border-bottom: 1px solid #303134; }
.fill .check { margin-right: 9px; }
.fill b { padding-top: 4px; }
.border-block { height: 134px; border-bottom: 1px solid #303134; padding: 11px 25px 0 21px; }
.border-block .row:first-child { height: 28px; }
.border-block .check { margin-right: 9px; margin-bottom: 1px; }
.border-block .row:first-child b { padding-top: 2px; }
.line-row { margin: 12px 0 0 12px; height: 34px; align-items: flex-start; }
.line-select { width: 201px; height: 33px; margin-right: 6px; display: flex; align-items: center; padding: 0 4px 0 15px; border: 1px solid #303134; border-radius: 5px; background: #222; }
.line-select i { width: 153px; height: 1px; margin-right: 14px; background: #a2a3a4; }
.num { width: 78px; height: 31px; line-height: 28px; padding-right: 3px; text-align: right; border: 1px solid #303134; border-radius: 5px; background: #121212; color: #dedede; font-size: 17.6px; }
.num.tall { height: 33px; line-height: 30px; }
.stepper { width: 17px; height: 30px; display: grid; grid-template-rows: 15px 14px; place-items: center; border: 1px solid #303134; border-radius: 4px; background: linear-gradient(#303134, #303134) 0 14px / 100% 1px no-repeat; }
.stepper i { width: 12px; height: 6px; background: #8a8a8a; }
.stepper .up { clip-path: polygon(50% 0, 100% 100%, 0 100%); }
.stepper .down { clip-path: polygon(0 0, 100% 0, 50% 100%); }
.perimeter { margin-top: 9px; height: 32px; align-items: flex-start; }
.plabel { width: 190px; margin-left: 29px; line-height: 36px; font-size: 17.3px; letter-spacing: -0.5px; color: #858585; }
.opacity { height: 52px; padding: 9px 24px 0 21px; align-items: flex-start; border-bottom: 1px solid #303134; }
.opacity b { width: 219px; line-height: 32px; letter-spacing: -0.6px; }
.effects { height: 55px; padding-left: 24px; border-bottom: 1px solid #303134; }
.effects .check { margin-right: 9px; }
.effects b { width: 133px; letter-spacing: -0.6px; }
.actions { height: 122px; padding: 12px 24px 0 21px; display: grid; grid-template-columns: 156px 156px; grid-template-rows: 30px 29px 29px; gap: 3px; border-bottom: 1px solid #303134; font: 18px "Liberation Sans", Arial, sans-serif; letter-spacing: 0; text-align: center; color: #dedede; }
.actions > div { border: 1px solid #2f3032; border-radius: 5px; background: #222; line-height: 27px; }
.actions .crop { margin-top: 1px; line-height: 26px; }
.actions .wide { grid-column: span 2; }
.select { display: flex; align-items: center; padding-right: 6px; }
.select span { flex: 1; padding-right: 1px; }
.props { height: 35px; display: grid; grid-template-columns: 176px 175px; gap: 3px; padding: 4px 3px; border-bottom: 1px solid #303134; color: #eee; font-weight: 700; font-size: 17.5px; }
.props div { height: 27px; line-height: 26px; background: #292929; display: flex; align-items: center; padding: 0 0 1px 1px; }
.props div:first-child { padding-left: 7px; gap: 7px; }

/* taskbar */
.taskbar { height: 72px; flex: none; display: flex; border-top: 2px solid #4a4452; background: linear-gradient(90deg, #2f2438, #2b2536 20%, #2a2437); color: #fff; font-size: 17.5px; letter-spacing: -0.1px; }
.weather { width: 472px; display: flex; padding: 15px 0 0 28px; }
.weather p:first-child { letter-spacing: -0.4px; }
.weather div { margin-left: 12px; line-height: 24px; margin-top: -5px; }
.weather .sub { color: #d2ced6; }
.apps { display: grid; grid-template-columns: repeat(14, 66px); height: 68px; }
.apps > div { position: relative; display: grid; place-items: center; }
.running::after { content: ""; position: absolute; bottom: 5px; width: 9px; height: 5px; border-radius: 3px; background: #a19da7; }
.running.current::after { width: 24px; background: #c3a5dc; }
.current::before { content: ""; position: absolute; left: 3px; top: 4px; width: 60px; height: 60px; border: 1px solid #443e50; border-radius: 6px; background: #383242; }
.current svg { position: relative; }
.badge { position: absolute; left: 33px; top: 9px; width: 28px; height: 24px; border-radius: 12px; background: #c5a6de; color: #17121c; font-size: 17px; line-height: 24px; text-align: center; }
.badge.profile { left: 36px; width: 23px; height: 23px; background: #ee6a02; color: #f6cfae; font-size: 14px; font-weight: 700; line-height: 23px; }
.zoomword { font: bold 10px "Open Sans", sans-serif; fill: #fff; }
.tray { margin-left: auto; width: 524px; display: flex; align-items: center; padding: 0 0 2px 103px; }
.cloud { margin-left: 28px; }
.wifi { margin-left: 24px; }
.sound { margin-left: 12px; }
.battery { margin-left: 12px; }
.clock { width: 107px; line-height: 24px; text-align: right; letter-spacing: -0.35px; }
.clock .date { letter-spacing: -0.15px; }
.bell { margin-left: 14px; }
.copilot { margin-left: 26px; }
.pre { font: bold 9.5px "Open Sans", sans-serif; fill: #1c1402; }
```
